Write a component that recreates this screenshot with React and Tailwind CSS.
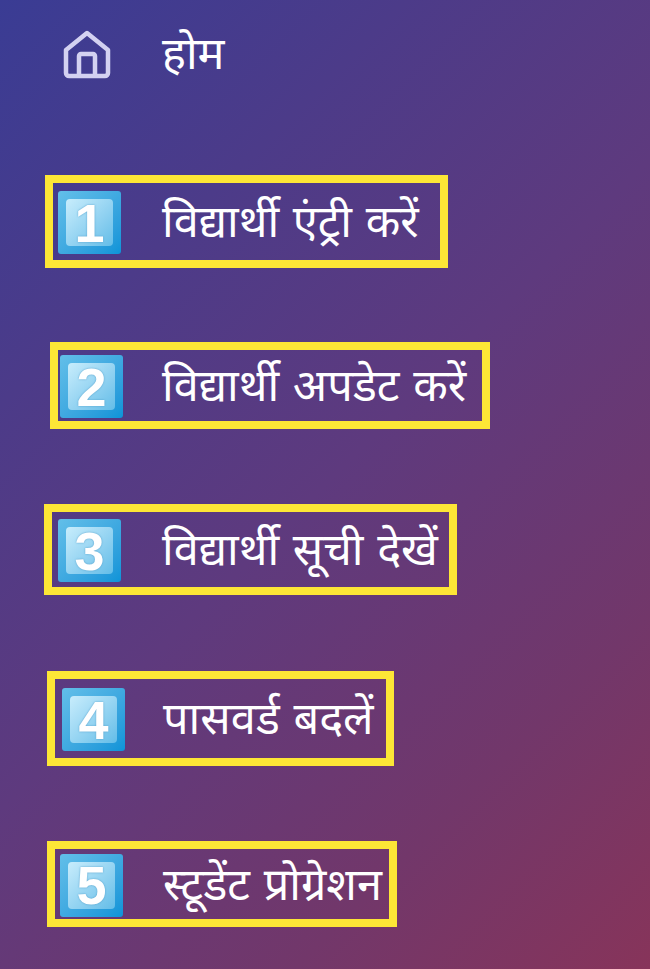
const NumKey = ({ n, className }) => (
  <div className={`flex h-[63px] w-[63px] shrink-0 items-center justify-center rounded-[3px] bg-gradient-to-br from-[#62bfe9] to-[#0a94d8] ${className}`}>
    <div className="flex h-[47px] w-[47px] items-center justify-center rounded-[4px] bg-gradient-to-br from-[#c8edfc] to-[#62bde8] font-['Liberation_Sans',sans-serif] text-[54px] font-bold leading-none text-white [text-shadow:0_0_2px_#4f9cc8]">
      {n}
    </div>
  </div>
);

const rows = [
  { n: 1, label: "विद्यार्थी एंट्री करें", box: "mt-[66px] ml-[45px] h-[93px] w-[403px]", icon: "ml-[5px]", text: "ml-[41px]" },
  { n: 2, label: "विद्यार्थी अपडेट करें", box: "mt-[74px] ml-[50px] h-[87px] w-[440px]", icon: "ml-[2px]", text: "ml-[39px]" },
  { n: 3, label: "विद्यार्थी सूची देखें", box: "mt-[75px] ml-[44px] h-[91px] w-[413px]", icon: "ml-[6px]", text: "ml-[41px]" },
  { n: 4, label: "पासवर्ड बदलें", box: "mt-[76px] ml-[47px] h-[95px] w-[347px]", icon: "ml-[7px]", text: "ml-[38px]" },
  { n: 5, label: "स्टूडेंट प्रोग्रेशन", box: "mt-[75px] ml-[47px] h-[86px] w-[350px]", icon: "ml-[5px]", text: "ml-[40px]" },
];

export default function App() {
  return (
    <div className="h-[969px] w-[650px] overflow-hidden bg-[linear-gradient(135deg,#3a3c94_0%,#5e3a7e_50%,#72376a_78%,#87345a_100%)] font-['Noto_Sans',sans-serif] text-white">
      <div className="flex h-[109px] items-center pl-[63px]">
        <svg viewBox="0 0 48 50" className="h-[50px] w-[48px] shrink-0" fill="none" stroke="#d3d1f1" strokeWidth="4.5" strokeLinejoin="round">
          <path d="M24 3 L45 20 V43 a3 3 0 0 1 -3 3 H6 a3 3 0 0 1 -3 -3 V20 Z" />
          <path d="M16 46 V26 a2 2 0 0 1 2 -2 H30 a2 2 0 0 1 2 2 V46" />
        </svg>
        <span className="ml-[51px] pb-[6px] text-[45px] leading-none">होम</span>
      </div>
      {rows.map((r) => (
        <div key={r.n} className={`flex items-center border-[8px] border-[#fde636] pt-[2px] ${r.box}`}>
          <NumKey n={r.n} className={r.icon} />
          <span className={`whitespace-nowrap pb-[6px] text-[45px] leading-none [word-spacing:2px] ${r.text}`}>{r.label}</span>
        </div>
      ))}
    </div>
  );
}
